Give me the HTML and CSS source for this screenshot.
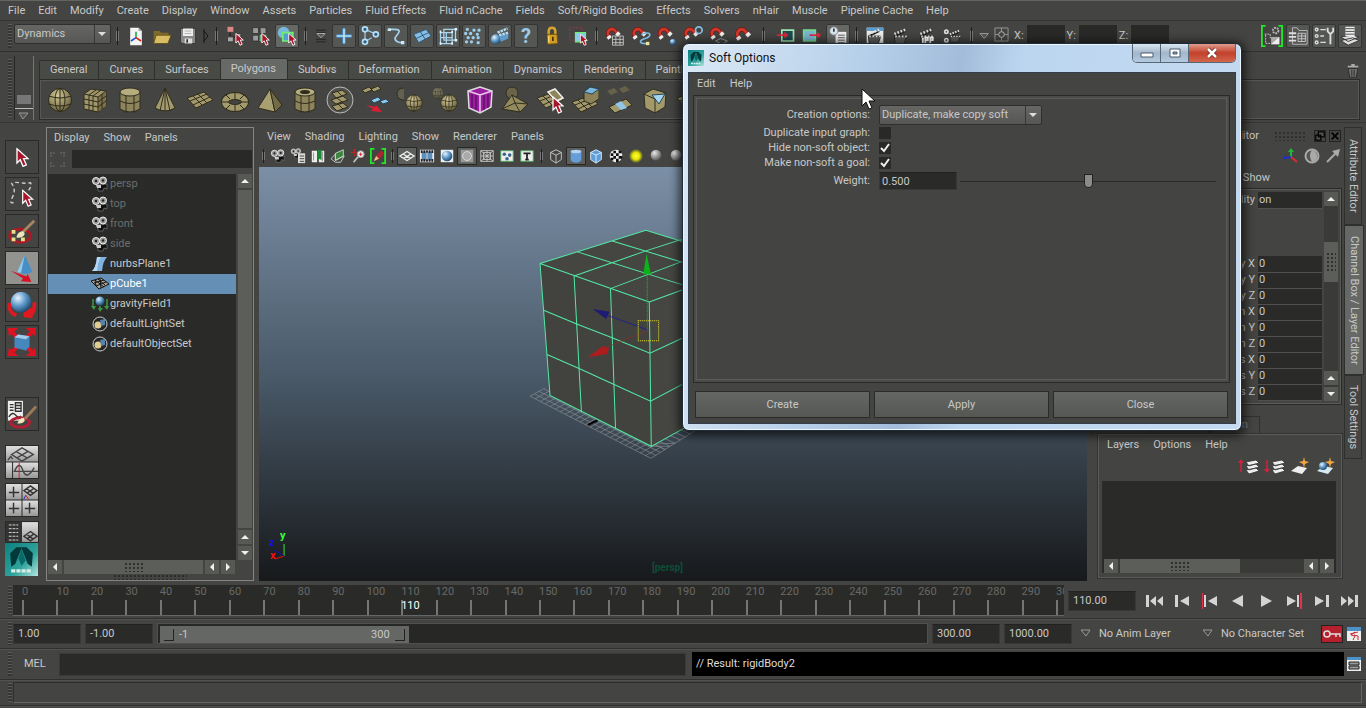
FILE: index.html
```html
<!DOCTYPE html>
<html lang="en">
<head>
    <meta charset="UTF-8">
    <meta name="viewport" content="width=device-width, initial-scale=1.0">
    <title>Autodesk Maya</title>
    <link rel="stylesheet" href="styles.css">
</head>
<body>
    <!-- shared icon shapes -->
    <svg class="sprites" aria-hidden="true">
        <defs>
            <radialGradient id="ball" cx="35%" cy="30%" r="75%"><stop offset="0" stop-color="#e8f4fc"/><stop offset=".5" stop-color="#5f9bcb"/><stop offset="1" stop-color="#1b4368"/></radialGradient>
            <radialGradient id="tanball" cx="40%" cy="30%" r="70%"><stop offset="0" stop-color="#d2c896"/><stop offset="1" stop-color="#6b633e"/></radialGradient>
            <radialGradient id="greyball" cx="35%" cy="30%" r="75%"><stop offset="0" stop-color="#e5e5e5"/><stop offset="1" stop-color="#555"/></radialGradient>
            <radialGradient id="glow"><stop offset="0" stop-color="#ffff40"/><stop offset=".5" stop-color="#e5e500"/><stop offset="1" stop-color="#e5e500" stop-opacity="0"/></radialGradient>
            <linearGradient id="steel" x2="0" y2="1"><stop offset="0" stop-color="#e0e0e0"/><stop offset="1" stop-color="#999"/></linearGradient>
            <linearGradient id="teal" x2="1" y2="1"><stop offset="0" stop-color="#0d7f7e"/><stop offset=".6" stop-color="#2fa39c"/><stop offset="1" stop-color="#b6e4dd"/></linearGradient>
        </defs>
        <symbol id="pointer" viewBox="0 0 12 18"><path d="M1 1v13l3-3 2.500 6 3-1.300-2.500-5.700h4z" fill="#a8142a" stroke="#fff" stroke-width="1.200"/></symbol>
        <symbol id="camera" viewBox="0 0 18 16"><path d="M7 9l9-1v5l-3-1-1 3H7z" fill="#111" stroke="#888" stroke-width=".6"/><circle cx="5" cy="5" r="3.500" fill="#999" stroke="#eee"/><circle cx="12" cy="4.500" r="3.500" fill="#999" stroke="#eee"/><circle cx="5" cy="5" r="1.200" fill="#222"/><circle cx="12" cy="4.500" r="1.200" fill="#222"/><path d="M5 9h5v3H6z" fill="#ccc"/></symbol>
        <symbol id="magnet" viewBox="0 0 24 24"><path d="M5 13C1 7 6 2 11 4.500L16 10" fill="none" stroke="#7c1b17" stroke-width="5"/><path d="M5 13C1 7 6 2 11 4.500L16 10" fill="none" stroke="#d0382c" stroke-width="3"/><path d="M14 8l3 3M4 12l2 3" stroke="#eee" stroke-width="5"/></symbol>
        <symbol id="clapper" viewBox="0 0 24 24"><path d="M4 12h15l-3 9H5z" fill="#5c5d5b" stroke="#222"/><path d="M4 11L16 6l2 1-12 6z" fill="#222"/><path d="M4 9.500l13-5" stroke="#ddd" stroke-width="3" stroke-dasharray="2 2"/><path d="M5 12.500h14" stroke="#ddd" stroke-width="2" stroke-dasharray="2 2"/></symbol>
        <symbol id="plane" viewBox="0 0 28 28"><path d="M1 12l17-6 9 8-17 8z" fill="#a1976a" stroke="#302d1d"/><path d="M4 15l17-7M7 19l17-8M7 10l9 9M12 8l9 9" stroke="#302d1d"/></symbol>
        <symbol id="sphere" viewBox="0 0 28 28"><circle cx="14" cy="14" r="11.500" fill="url(#tanball)" stroke="#2c2919"/><ellipse cx="14" cy="14" rx="5" ry="11.500" fill="none" stroke="#2c2919"/><path d="M14 2.500v23M3 10q11 4 22 0M3 18q11 4 22 0" fill="none" stroke="#2c2919"/></symbol>
        <symbol id="layers" viewBox="0 0 20 20"><path d="M6 13l10-2 3 3-10 3zM6 9l10-2 3 3-10 3zM6 5l10-2 3 3-10 3z" fill="#eee" stroke="#333" stroke-width=".8"/></symbol>
        <symbol id="maya" viewBox="0 0 32 32"><path fill="url(#teal)" d="M0 0h32v32H0z"/><path d="M5 10l6-6h10l6 6-1 13-4-3-6-15-6 15-4 3z" fill="#04393b"/><path d="M13 15l3-9 4 11-4 5z" fill="#0b6967"/><path d="M6 27h20" stroke="#d6eee9" stroke-width="3" stroke-dasharray="4 1"/></symbol>
        <symbol id="up" viewBox="0 0 14 14"><path d="M3 9l4-4 4 4z" fill="#f0f0f0"/></symbol>
        <symbol id="down" viewBox="0 0 14 14"><path d="M3 5l4 4 4-4z" fill="#f0f0f0"/></symbol>
        <symbol id="left" viewBox="0 0 14 14"><path d="M9 3L5 7l4 4z" fill="#f0f0f0"/></symbol>
        <symbol id="right" viewBox="0 0 14 14"><path d="M5 3l4 4-4 4z" fill="#f0f0f0"/></symbol>
    </svg>

    <nav class="menubar main-menu">
        <button>File</button><button>Edit</button><button>Modify</button><button>Create</button><button>Display</button><button>Window</button><button>Assets</button><button>Particles</button><button>Fluid Effects</button><button>Fluid nCache</button><button>Fields</button><button>Soft/Rigid Bodies</button><button>Effects</button><button>Solvers</button><button>nHair</button><button>Muscle</button><button>Pipeline Cache</button><button>Help</button>
    </nav>

    <div class="status-line">
        <span class="grip"></span>
        <select class="mode" aria-label="Menu set"><option>Dynamics</option></select>
        <i class="sep"></i>
        <button class="tool" aria-label="New scene"><svg viewBox="0 0 24 24"><path d="M5 2h10l4 4v17H5z" fill="#f4f4f4"/><path d="M15 2v4h4z" fill="#aaa"/><path d="M12 14V7" stroke="#22b14c" stroke-width="2"/><path d="M12 14l-6 4" stroke="#1c52d8" stroke-width="2"/><path d="M12 14l6 4" stroke="#d8201c" stroke-width="2"/></svg></button>
        <button class="tool" aria-label="Open scene"><svg viewBox="0 0 24 24"><path d="M2 6h7l2 2h9v12H2z" fill="#7f6a2c"/><path d="M5 11h18l-4 10H2z" fill="#d9bd62" stroke="#5b4a19"/></svg></button>
        <button class="tool" aria-label="Save scene"><svg viewBox="0 0 24 24"><path d="M3 3h18v18H5l-2-2z" fill="#898989" stroke="#333"/><path d="M6 3h12v9H6z" fill="#eee"/><path d="M8 6h8M8 9h8" stroke="#aaa"/><path d="M8 15h9v6H8z" fill="#ddd"/><path d="M10 16h2v4h-2z" fill="#333"/></svg></button>
        <svg class="arrow" viewBox="0 0 8 20"><path d="M2 3v14M2 5l4 5-4 5" fill="none" stroke="#151515"/></svg>
        <i class="sep"></i>
        <button class="tool" aria-label="Select by hierarchy"><svg viewBox="0 0 24 24"><path d="M3 1h7v6H3z" fill="#d88"/><path d="M6 8v5h6" stroke="#111" fill="none"/><path d="M3 13h7v6H3zM13 9h6v6h-6z" fill="#aaa" stroke="#333"/><use href="#pointer" x="12" y="8" width="11" height="16"/></svg></button>
        <button class="tool" aria-label="Select by object"><svg viewBox="0 0 24 24"><path d="M2 2h7v7H2zM11 2h7v7h-7zM2 11h7v7H2z" fill="#9b9b9b" stroke="#333"/><path d="M11 11h7v7h-7z" fill="#3ea458" stroke="#7fd890"/><use href="#pointer" x="12" y="8" width="11" height="16"/></svg></button>
        <button class="tool on" aria-label="Select by component"><svg viewBox="0 0 24 24"><circle cx="8" cy="8" r="7" fill="#76b9dd"/><path d="M7 8h12v10H7z" fill="#549fd0" stroke="#6df06d" stroke-width="2"/><use href="#pointer" x="13" y="8" width="11" height="16"/></svg></button>
        <i class="sep"></i>
        <button class="tool narrow" aria-label="Selection masks"><svg viewBox="0 0 20 24"><path d="M4 5h12M4 8h12M4 16h12M4 19h12" stroke="#222"/><path d="M5 9l5 5 5-5z" fill="#555" stroke="#bbb"/></svg></button>
        <button class="tool framed" aria-label="Handles"><svg viewBox="0 0 24 24"><path d="M12 3v18M3 12h18" stroke="#3f81b5" stroke-width="5"/><path d="M12 3v18M3 12h18" stroke="#bde2f8" stroke-width="2"/></svg></button>
        <button class="tool framed" aria-label="Joints"><svg viewBox="0 0 24 24"><path d="M6 4v15M6 4l14 6M6 19l8-5" stroke="#9bcbea" stroke-width="1.500"/><g fill="#2c5f88" stroke="#b8dff5" stroke-width="2"><circle cx="6" cy="4" r="3"/><circle cx="19" cy="10" r="3"/><circle cx="6" cy="19" r="3"/></g></svg></button>
        <button class="tool framed" aria-label="Curves"><svg viewBox="0 0 24 24"><path d="M3 4h7c12 0 2 7 1 10-1 5 5 6 9 6" fill="none" stroke="#a5d2ed" stroke-width="2"/><path d="M2 3h4v3H2zM18 18h4v4h-4z" fill="#cdeafa"/></svg></button>
        <button class="tool framed" aria-label="Surfaces"><svg viewBox="0 0 24 24"><path d="M2 10l15-6 6 8-15 8z" fill="#84bce4" stroke="#294c68"/><path d="M5 15l15-7M10 7l6 9" stroke="#294c68"/></svg></button>
        <button class="tool framed" aria-label="Deformations"><svg viewBox="0 0 24 24"><path d="M3 8h14v13H3zM7 4h14v13H7zM3 14h14M10 8v13" fill="none" stroke="#a9d5ef" stroke-width="1.500"/><path d="M2 7h2M16 7h2M2 21h2M16 21h2M20 4h3M20 17h3" stroke="#e0f4ff" stroke-width="3"/></svg></button>
        <button class="tool framed" aria-label="Dynamics"><svg viewBox="0 0 24 24"><path d="M4 4h2M12 5h9M2 9h9M16 10h6M5 14h15M3 19h10M17 20h5" stroke="#9bcdec" stroke-width="4" stroke-linecap="round" stroke-dasharray="0 6"/></svg></button>
        <button class="tool framed" aria-label="Rendering"><svg viewBox="0 0 24 24"><circle cx="7" cy="16" r="6" fill="url(#ball)"/><path d="M11 12l11-3v6l-9 4z" fill="#5f9bcb"/><path d="M9 8l12-5M11 11l11-3" stroke="#b6def5" stroke-width="3" stroke-dasharray="3 1"/></svg></button>
        <button class="tool framed help" aria-label="Miscellaneous">?</button>
        <button class="tool" aria-label="Lock selection"><svg viewBox="0 0 24 24"><path d="M8 11V7q0-5 4-5t4 5v4" fill="none" stroke="#d5a52d" stroke-width="3"/><path d="M6 10h12l1 11-12 1z" fill="#d39d23" stroke="#6c4a0d"/><path d="M8 12v8" stroke="#f3d06a" stroke-width="2"/><path d="M13 13v5" stroke="#462f06" stroke-width="2"/></svg></button>
        <button class="tool" aria-label="Highlight selection"><svg viewBox="0 0 24 24"><path d="M2 2h15v15H2z" fill="none" stroke="#b72e48" stroke-dasharray="2 2"/><path d="M9 8h12v11H9z" fill="#8dc7ec" stroke="#6df06d" stroke-width="1.500"/><use href="#pointer" x="14" y="9" width="10" height="15"/></svg></button>
        <i class="sep"></i>
        <button class="tool" aria-label="Snap to grids"><svg viewBox="0 0 24 24"><use href="#magnet"/><path d="M9 12h13v11H9zM9 16h13M9 20h13M13 12v11M18 12v11" stroke="#ccc" fill="none"/></svg></button>
        <button class="tool" aria-label="Snap to curves"><svg viewBox="0 0 24 24"><use href="#magnet"/><path d="M13 10c12-5 12 3 4 5s-8 7 4 6" fill="none" stroke="#81b9df" stroke-width="2"/><path d="M18 19h4v4h-4z" fill="#eee59a"/></svg></button>
        <button class="tool" aria-label="Snap to points"><svg viewBox="0 0 24 24"><use href="#magnet"/><circle cx="19" cy="19" r="3.500" fill="url(#ball)"/></svg></button>
        <button class="tool" aria-label="Snap to projected center"><svg viewBox="0 0 24 24"><use href="#magnet"/><circle cx="19" cy="5" r="4" fill="none" stroke="#86bfe5" stroke-width="2"/></svg></button>
        <button class="tool" aria-label="Snap to view planes"><svg viewBox="0 0 24 24"><use href="#magnet"/><path d="M8 18l6-3 8 3-6 4z" fill="none" stroke="#aaa"/></svg></button>
        <button class="tool" aria-label="Make live"><svg viewBox="0 0 24 24"><use href="#magnet" x="-1" y="0" width="26" height="26"/></svg></button>
        <i class="sep"></i>
        <button class="tool spaced" aria-label="Inputs"><svg viewBox="0 0 24 24"><path d="M7 5h14v13H7z" fill="#20494e" stroke="#9ee7b2" stroke-width="2"/><path d="M1 11h10" stroke="#e3243d" stroke-width="2"/><path d="M10 7l5 4-5 4z" fill="#e3243d"/></svg></button>
        <button class="tool" aria-label="Outputs"><svg viewBox="0 0 24 24"><path d="M2 5h14v13H2z" fill="#77b5d3" stroke="#75da8c" stroke-width="2"/><path d="M9 11h10" stroke="#e3243d" stroke-width="2"/><path d="M18 7l5 4-5 4z" fill="#e3243d"/></svg></button>
        <button class="tool on" aria-label="Construction history"><svg viewBox="0 0 24 24"><path d="M9 7h13v15H9z" fill="#eee"/><path d="M12 11h8M12 14h8M12 17h8M12 20h8" stroke="#444"/><circle cx="7" cy="6" r="5" fill="#d5e6ee" stroke="#777"/><path d="M7 3v4" stroke="#333" stroke-width="2"/></svg></button>
        <i class="sep"></i>
        <button class="tool" aria-label="Render view"><svg viewBox="0 0 24 24"><path d="M2 2h20v20H2z" fill="#eee"/><path d="M2 2h20v4H2z" fill="#5b9bcc"/><use href="#clapper"/></svg></button>
        <button class="tool" aria-label="Render"><svg viewBox="0 0 24 24"><use href="#clapper"/></svg></button>
        <button class="tool" aria-label="IPR render"><svg viewBox="0 0 24 24"><use href="#clapper"/><path d="M7 14v7M10 21v-7h3v3h-3M16 21v-7h3v3h-3" stroke="#fff" fill="none" stroke-width="2"/></svg></button>
        <button class="tool" aria-label="Render settings"><svg viewBox="0 0 24 24"><use href="#clapper" x="5" y="0" width="20" height="24"/><circle cx="4" cy="7" r="2" fill="none" stroke="#ddd" stroke-width="2"/><circle cx="4" cy="17" r="2" fill="none" stroke="#ddd" stroke-width="2"/></svg></button>
        <i class="sep"></i>
        <button class="tool slim" aria-label="Input mode"><svg viewBox="0 0 20 24"><path d="M4 9l5 6 5-6z" fill="#555" stroke="#aaa"/></svg></button>
        <svg class="target" viewBox="0 0 16 16"><path d="M1 1h14v14H1zM8 1v14M1 8h14" fill="none" stroke="#999"/><circle cx="8" cy="8" r="3" fill="#444" stroke="#bbb"/></svg>
        <label class="axis">X: <input type="text"></label>
        <label class="axis">Y: <input type="text"></label>
        <label class="axis">Z: <input type="text"></label>
        <div class="panel-toggles">
            <button class="tool" aria-label="Modeling toolkit"><svg viewBox="0 0 24 24"><path d="M4 10h6v4h4M5 11v9h6" fill="none" stroke="#ccc" stroke-dasharray="2 1"/><path d="M11 13h9v8h-9z" fill="#aaa"/><path d="M11 21h9v-8z" fill="#eee"/><circle cx="16" cy="6" r="3" fill="none" stroke="#bbb" stroke-width="2" stroke-dasharray="2 1"/><path d="M5 1H1v22h4M19 1h4v22h-4" fill="none" stroke="#21e72a" stroke-width="2"/></svg></button>
            <button class="tool framed" aria-label="Attribute editor"><svg viewBox="0 0 24 24"><path d="M6 3h5l2 3h9v15H6z" fill="#555" stroke="#bbb"/><path d="M2 9h8M2 13h8M2 17h8" stroke="#ddd" stroke-width="2"/><path d="M12 9h8v9h-8zM12 12h8M12 15h8M16 9v9" fill="none" stroke="#ccc"/></svg></button>
            <button class="tool framed" aria-label="Tool settings"><svg viewBox="0 0 24 24"><g fill="none" stroke="#ddd" stroke-width="1.500"><circle cx="4" cy="5" r="1.500"/><circle cx="4" cy="12" r="1.500"/><circle cx="4" cy="19" r="1.500"/><path d="M8 5h6M8 12h4M8 19h6"/></g><path d="M16 3v4l3 3 3-3V3M19 10v11" fill="none" stroke="#ddd" stroke-width="2"/></svg></button>
            <button class="tool framed" aria-label="Channel box"><svg viewBox="0 0 24 24"><path d="M2 17l13-3 7 3-12 5zM2 13l12-2 8 2-12 5z" fill="#ddd" stroke="#333"/><path d="M7 12V2h10v11z" fill="#eee"/><path d="M7 4h10M7 7h10M7 10h10" stroke="#444"/></svg></button>
        </div>
    </div>

    <div class="shelf">
        <span class="grip"></span>
        <div class="shelf-switch"><i class="block"></i><svg viewBox="0 0 14 8"><path d="M2 1h9L6 7z" fill="#555" stroke="#999"/></svg></div>
        <div class="shelf-body">
            <div class="shelf-tabs">
                <button>General</button><button>Curves</button><button>Surfaces</button><button class="active">Polygons</button><button>Subdivs</button><button>Deformation</button><button>Animation</button><button>Dynamics</button><button>Rendering</button><button>PaintEffects</button>
                <svg class="trash" viewBox="0 0 16 16"><path d="M3 5h10l-1 10H4z" fill="#888" stroke="#222"/><path d="M2 3h12M6 1h4" stroke="#aaa" stroke-width="2"/><path d="M6 6v8M8 6v8M10 6v8" stroke="#222"/></svg>
            </div>
            <div class="shelf-items">
                <button aria-label="Sphere"><svg viewBox="0 0 28 28"><use href="#sphere"/></svg></button>
                <button aria-label="Cube"><svg viewBox="0 0 28 28"><path d="M3 8l7-5 15 2v15l-8 6-14-3z" fill="#a0966a" stroke="#302d1d"/><path d="M17 11l8-6v15l-8 6z" fill="#7a7149"/><path d="M3 8l14 3 8-6M17 11v15M8 9v15M12 10v15M3 13l14 3 8-6M3 18l14 3 8-6M15 4l-7 5M20 4l-8 6M21 8v15" fill="none" stroke="#302d1d"/></svg></button>
                <button aria-label="Cylinder"><svg viewBox="0 0 28 28"><path d="M4 6v17q10 6 20 0V6z" fill="#8d845b" stroke="#302d1d"/><ellipse cx="14" cy="6" rx="10" ry="4" fill="#b5ac7f" stroke="#302d1d"/><path d="M4 15q10 5 20 0M10 10v17M18 10v17" fill="none" stroke="#302d1d"/></svg></button>
                <button aria-label="Cone"><svg viewBox="0 0 28 28"><path d="M14 2L4 22q10 6 20 0z" fill="#a39a6c" stroke="#302d1d"/><path d="M14 2l-5 23M14 2v23M14 2l5 23" stroke="#302d1d"/></svg></button>
                <button aria-label="Plane"><svg viewBox="0 0 28 28"><use href="#plane"/></svg></button>
                <button aria-label="Torus"><svg viewBox="0 0 28 28"><ellipse cx="14" cy="16" rx="10" ry="6" fill="none" stroke="#302d1d" stroke-width="8"/><ellipse cx="14" cy="16" rx="10" ry="6" fill="none" stroke="#a39a6c" stroke-width="6"/><path d="M14 7v6M14 19v6M1 16h6M21 16h6M5 9l4 4M23 9l-4 4M5 23l4-4M23 23l-4-4" stroke="#302d1d"/></svg></button>
                <button aria-label="Pyramid"><svg viewBox="0 0 28 28"><path d="M14 3L2 22l17 4z" fill="#a9a071" stroke="#302d1d"/><path d="M14 3l5 23 7-7z" fill="#736b45" stroke="#302d1d"/></svg></button>
                <button aria-label="Pipe"><svg viewBox="0 0 28 28"><path d="M4 6v17q10 6 20 0V6z" fill="#8d845b" stroke="#302d1d"/><ellipse cx="14" cy="6" rx="10" ry="4" fill="#b5ac7f" stroke="#302d1d"/><ellipse cx="14" cy="6" rx="5" ry="2" fill="#302d1d"/><path d="M4 15q10 5 20 0M10 10v17M18 10v17" fill="none" stroke="#302d1d"/></svg></button>
                <button aria-label="Platonic solids"><svg viewBox="0 0 28 28"><circle cx="14" cy="14" r="13" fill="#50514b" stroke="#bbb"/><g fill="#a1976a" stroke="#302d1d"><path d="M6 20l11-3 5 4-11 4zM5 14l12-4 5 4-12 4zM6 7l10-3 5 4-11 4zM12 18l5 5M11 12l5 4M11 5l5 5"/></g></svg></button>
                <button aria-label="Extract"><svg viewBox="0 0 28 28"><path d="M1 4l7-3 3 3-7 3zM10 3l7-3 3 3-7 3z" fill="#a39a6c" stroke="#302d1d"/><path d="M10 14l7-3 3 3-7 3zM19 15l6-2 3 3-6 2z" fill="#8cc7e8" stroke="#274458"/><path d="M5 19l10 2-1-3 7 8-11-1 2-2z" fill="#df1e35"/></svg></button>
                <button aria-label="Separate"><svg viewBox="0 0 28 28"><path d="M8 2q-7 0-7 6t7 6" fill="#626050" stroke="#302d1d"/><use href="#sphere" x="8" y="7" width="20" height="20"/></svg></button>
                <button aria-label="Combine"><svg viewBox="0 0 28 28"><use href="#sphere" x="0" y="0" width="14" height="14" opacity=".5"/><use href="#sphere" x="8" y="7" width="20" height="20"/></svg></button>
                <button aria-label="Smooth proxy"><svg viewBox="0 0 28 28"><path d="M2 5l12-4 12 4-1 16-11 6L3 22z" fill="#9b1d9f" stroke="#ddd" stroke-width="1.500"/><path d="M2 5l12 4 12-4M14 9v18" fill="none" stroke="#eac9ea" stroke-width="1.500"/><path d="M6 8v14M10 9v15M18 9v15M22 8v14" stroke="#420c4a"/></svg></button>
                <button aria-label="Sculpt"><svg viewBox="0 0 28 28"><circle cx="11" cy="7" r="6" fill="#696449" stroke="#302d1d"/><path d="M1 23L11 9l16 9-8 8z" fill="#938a5e" stroke="#302d1d"/><path d="M1 23l13-6 5 9M11 9l3 8 13 1" fill="none" stroke="#302d1d"/></svg></button>
                <button aria-label="Split polygon"><svg viewBox="0 0 28 28"><use href="#plane"/><path d="M12 6l7-3 8 9-7 3z" fill="#8e855a" stroke="#eee" stroke-width="1.500"/><use href="#pointer" x="16" y="10" width="12" height="18"/></svg></button>
                <button aria-label="Extrude"><svg viewBox="0 0 28 28"><use href="#plane" y="4"/><path d="M13 6l6-5 9 2v10l-8 5-7-3z" fill="#8c8359" stroke="#302d1d"/><path d="M13 6l6-5 9 2-7 5z" fill="#79b8dd" stroke="#284458"/></svg></button>
                <button aria-label="Bridge"><svg viewBox="0 0 28 28"><path d="M1 5l7-3 4 4-7 3zM13 3l6-3 5 4-7 3z" fill="#666248"/><path d="M3 21l17-8 6 6-17 8z" fill="#a39a6c" stroke="#302d1d"/><path d="M9 18l6-3 6 7-6 2z" fill="#91c6e7"/></svg></button>
                <button aria-label="Bevel"><svg viewBox="0 0 28 28"><path d="M3 8l9-5 13 4-1 14-10 6-10-5z" fill="#a39a6c" stroke="#302d1d"/><path d="M3 8l11 5 11-6M14 13v14" fill="none" stroke="#302d1d"/><path d="M11 9l13-1-6 10z" fill="#a4d3ed" stroke="#284458"/></svg></button>
                <button aria-label="Merge"><svg viewBox="0 0 28 28"><use href="#plane"/></svg></button>
            </div>
        </div>
    </div>

    <main class="workspace">
        <aside class="toolbox">
            <button aria-label="Select"><svg viewBox="0 0 34 34"><use href="#pointer" x="10" y="7" width="15" height="21"/></svg></button>
            <button aria-label="Lasso"><svg viewBox="0 0 34 34"><path d="M8 26Q3 28 7 20T6 6q2-2 8-1t12 0q2 3-2 8" fill="none" stroke="#ccc" stroke-width="1.500" stroke-dasharray="4 3"/><use href="#pointer" x="16" y="12" width="14" height="19"/></svg></button>
            <button aria-label="Paint select"><svg viewBox="0 0 34 34"><ellipse cx="15" cy="22" rx="11" ry="7" fill="none" stroke="#b01724" stroke-width="3"/><path d="M18 18L30 6" stroke="#a48662" stroke-width="3"/><path d="M11 24q1-6 7-7l2 3q-2 5-9 4z" fill="#eee5ba"/><path d="M6 16h4v4H6zM6 24h4v4H6zM16 24h4v4h-4z" fill="#e8df8d"/></svg></button>
            <button class="active" aria-label="Move"><svg viewBox="0 0 34 34"><path d="M20 3l-8 18q8 5 16 0z" fill="#4790c5"/><path d="M20 3l-4 19q-3 0-4-1z" fill="#96c9eb"/><path d="M5 20l17 6 1-3 4 9-11-1 2-3z" fill="#d61125"/></svg></button>
            <button aria-label="Rotate"><svg viewBox="0 0 34 34"><path d="M4 15q-2 10 7 13M30 14q1 8-3 13" fill="none" stroke="#df1822" stroke-width="4"/><path d="M18 21l12-1-2 11-9-1z" fill="#df1822"/><circle cx="16" cy="14" r="11" fill="url(#ball)"/></svg></button>
            <button aria-label="Scale"><svg viewBox="0 0 34 34"><path d="M7 7l20 20M27 7L7 27" stroke="#e01120" stroke-width="4"/><path d="M2 2h11l-10 9zM32 2H21l10 9zM2 32h11L3 23zM32 32H21l10-9z" fill="#e01120"/><path d="M9 12l4-3 12 2v11l-4 4-12-3z" fill="#4588bd"/><path d="M9 12l4-3 12 2-4 3z" fill="#a2cbe9"/></svg></button>
            <button class="last-tool" aria-label="Last tool"><svg viewBox="0 0 34 34"><path d="M2 3h16v21H2z" fill="#eee"/><path d="M4 7h4M4 10h4M4 13h4M10 5h6v9h-6zM10 8h6M10 11h6M3 20q4-6 7-2t6 1" fill="none" stroke="#333" stroke-width="1.500"/><ellipse cx="15" cy="26" rx="10" ry="5" fill="none" stroke="#b21e34" stroke-width="3"/><path d="M20 22L32 9" stroke="#9d7a56" stroke-width="3"/><path d="M12 27q2-6 7-6l1 3q-2 4-8 3z" fill="#eee5ba"/></svg></button>
            <button class="layout" aria-label="Persp graph layout"><svg viewBox="0 0 34 34"><path d="M0 0h34v17H0z" fill="url(#steel)"/><path d="M0 17h34v17H0z" fill="url(#steel)"/><path d="M0 17h34M7 17v17" stroke="#222"/><path d="M6 9l11-7 12 7-12 7zM11 6l12 7M23 6l-12 7M2 15l3-4 2 3M8 27h26M9 27q5-12 9-1t12-3" fill="none" stroke="#444" stroke-width="1.500"/><path d="M14 18v16" stroke="#d13"/></svg></button>
            <button class="layout" aria-label="Four view"><svg viewBox="0 0 34 34"><path d="M0 0h34v17H0z" fill="url(#steel)"/><path d="M0 17h34v17H0z" fill="url(#steel)"/><path d="M17 0v34M0 17h34" stroke="#222"/><path d="M8 3v11M3 9h11M8 20v11M3 26h11M25 20v11M20 26h11M19 7l7-5 7 5-7 5zM22 5l7 5M29 5l-7 5" fill="none" stroke="#333" stroke-width="1.500"/><path d="M19 16l2-4" stroke="#22c"/><path d="M21 12l3 4" stroke="#d12"/></svg></button>
            <button class="layout cut" aria-label="Outliner persp layout"><svg viewBox="0 0 34 21"><path d="M0 0h17v21H0z" fill="#333"/><path d="M17 0h17v21H17z" fill="url(#steel)"/><path d="M3 3h10M3 7h10M3 11h10M3 15h10M3 19h10" stroke="#ddd" stroke-dasharray="3 1"/><path d="M19 15l7-5 7 5-7 5zM22 13l7 5M29 13l-7 5" fill="none" stroke="#333" stroke-width="1.500"/></svg></button>
            <svg class="logo" viewBox="0 0 32 32"><use href="#maya"/></svg>
        </aside>

        <section class="outliner">
            <nav class="menubar"><button>Display</button><button>Show</button><button>Panels</button></nav>
            <div class="filter"><svg viewBox="0 0 16 16"><path d="M1 5V1h4M11 1h4v4M15 11v4h-4M5 15H1v-4" fill="none" stroke="#5e5f5d" stroke-width="2" stroke-dasharray="2 1"/></svg><input type="text" aria-label="Filter"></div>
            <div class="tree-area">
                <ul class="tree">
                    <li class="dim"><svg viewBox="0 0 18 16"><use href="#camera"/></svg>persp</li>
                    <li class="dim"><svg viewBox="0 0 18 16"><use href="#camera"/></svg>top</li>
                    <li class="dim"><svg viewBox="0 0 18 16"><use href="#camera"/></svg>front</li>
                    <li class="dim"><svg viewBox="0 0 18 16"><use href="#camera"/></svg>side</li>
                    <li><svg viewBox="0 0 18 16"><path d="M6 1h10q-4 4-5 14H1Q5 12 6 1z" fill="#7fb2e0"/><path d="M6 1h4q-3 4-4 14H1Q5 12 6 1z" fill="#b9d8f2"/></svg>nurbsPlane1</li>
                    <li class="selected"><svg viewBox="0 0 18 16"><path d="M0 5l10-3 8 6-10 5zM3 7l10-3M5 10l10-4M4 4l9 7M7 3l7 6M4 4l1 6M9 3l1 9" fill="#a8a496" stroke="#111"/></svg>pCube1</li>
                    <li><svg viewBox="0 0 18 16"><circle cx="9" cy="5" r="4.500" fill="url(#ball)"/><path d="M2 3v9M16 3v9M9 10v4" stroke="#3b9842" stroke-width="1.500"/><path d="M0 10h5l-2 4zM13 10h5l-2 4zM7 12h5l-3 4z" fill="#3b9842"/></svg>gravityField1</li>
                    <li><svg viewBox="0 0 18 16"><circle cx="9" cy="8" r="7" fill="#252525" stroke="#ccc"/><circle cx="7" cy="9" r="3.500" fill="#e0cd91"/><path d="M9 4l5-1v6l-4 1z" fill="#5682ac"/></svg>defaultLightSet</li>
                    <li><svg viewBox="0 0 18 16"><circle cx="9" cy="8" r="7" fill="#252525" stroke="#ccc"/><circle cx="7" cy="9" r="3.500" fill="#e0cd91"/><path d="M9 4l5-1v6l-4 1z" fill="#5682ac"/></svg>defaultObjectSet</li>
                </ul>
                <div class="vscroll"><svg class="cap"><use href="#up"/></svg><span class="thumb"></span><svg class="cap"><use href="#up"/></svg><svg class="cap"><use href="#down"/></svg></div>
            </div>
            <div class="hscroll"><svg class="cap"><use href="#left"/></svg><span class="thumb"><i class="dots"></i></span><svg class="cap"><use href="#left"/></svg><svg class="cap"><use href="#right"/></svg></div>
            <div class="resize"></div>
        </section>

        <section class="viewport">
            <nav class="menubar"><button>View</button><button>Shading</button><button>Lighting</button><button>Show</button><button>Renderer</button><button>Panels</button></nav>
            <div class="view-tools">
                <i class="sep"></i>
                <button aria-label="Select camera"><svg viewBox="0 0 18 18"><use href="#camera"/></svg></button>
                <button aria-label="Camera attributes"><svg viewBox="0 0 18 18"><use href="#camera" width="14" height="12"/><path d="M9 6h8v11H9z" fill="#ddd"/><path d="M11 9h5M11 12h5M11 15h5" stroke="#333"/></svg></button>
                <button aria-label="Bookmarks"><svg viewBox="0 0 18 18"><path d="M2 3h6v13H2zM10 3h6v13h-6z" fill="#eee"/><path d="M4 5v9M14 4v11" stroke="#888"/><path d="M9 2h4v12l-2-2-2 2z" fill="#198634"/></svg></button>
                <button aria-label="Image plane"><svg viewBox="0 0 18 18"><path d="M6 6l9-4v7l-9 5z" fill="#3e8440" stroke="#c7dcc7"/><path d="M1 12l5-5v7l10-5-4 7H6z" fill="none" stroke="#c7dcc7"/></svg></button>
                <button aria-label="2D pan zoom"><svg viewBox="0 0 18 18"><path d="M5 1v9M1 5h9" stroke="#d22" stroke-width="1.500" stroke-dasharray="2 1"/><circle cx="12" cy="7" r="4" fill="#eee" stroke="#888"/><path d="M10 7h4M12 5v4" stroke="#c22"/><path d="M9 10l-5 6" stroke="#bbb" stroke-width="2"/></svg></button>
                <button aria-label="Grease pencil"><svg viewBox="0 0 18 18"><path d="M4 15l3-6 5-6 4 3-5 6z" fill="#b5222f"/><path d="M4 15l3-6 3 3z" fill="#eac98f"/><path d="M5 1H1v16h4M13 1h4v16h-4" fill="none" stroke="#21e72a" stroke-width="2"/></svg></button>
                <i class="sep"></i>
                <button class="on" aria-label="Grid"><svg viewBox="0 0 18 18"><path d="M1 9l8-5 8 5-8 5zM5 7l8 5M13 7l-8 5" fill="none" stroke="#eee" stroke-width="1.500"/></svg></button>
                <button aria-label="Film gate"><svg viewBox="0 0 18 18"><path d="M2 3h14v12H2z" fill="#5e8fb8" stroke="#eee" stroke-width="2"/><path d="M2 4h14M2 14h14" stroke="#222" stroke-width="3" stroke-dasharray="2 1"/><path d="M9 5v8" stroke="#ddd"/></svg></button>
                <button aria-label="Resolution gate"><svg viewBox="0 0 18 18"><path d="M2 2h14v14H2z" fill="#eee"/><circle cx="9" cy="9" r="6" fill="url(#ball)"/></svg></button>
                <button class="on" aria-label="Gate mask"><svg viewBox="0 0 18 18"><path d="M2 2h14v14H2z" fill="#999"/><circle cx="9" cy="9" r="5" fill="#aaa" stroke="#ddd"/></svg></button>
                <button aria-label="Field chart"><svg viewBox="0 0 18 18"><path d="M2 3h14v12H2zM2 3l14 12M16 3L2 15M9 3v12M2 9h14M5 5h8v8H5z" fill="none" stroke="#ccc"/></svg></button>
                <button aria-label="Safe action"><svg viewBox="0 0 18 18"><path d="M2 3h14v12H2z" fill="#eee" stroke="#4aa75a"/><circle cx="6" cy="7" r="2" fill="#37648a"/><circle cx="12" cy="8" r="2" fill="#37648a"/><circle cx="9" cy="12" r="2" fill="#37648a"/></svg></button>
                <button aria-label="Safe title"><svg viewBox="0 0 18 18"><path d="M2 3h14v12H2z" fill="#eee" stroke="#4aa75a"/><path d="M5 6h8M9 6v8M7 13h4" stroke="#222" stroke-width="2"/></svg></button>
                <i class="sep"></i>
                <button aria-label="Wireframe"><svg viewBox="0 0 18 18"><path d="M3 5l6-3 6 3v8l-6 4-6-4zM3 5l6 3 6-3M9 8v9" fill="none" stroke="#ccc"/></svg></button>
                <button class="on" aria-label="Smooth shade"><svg viewBox="0 0 18 18"><path d="M3 4h12v10q-6 5-12 0z" fill="#669dd8"/><ellipse cx="9" cy="4" rx="6" ry="2" fill="#b2d3f3"/></svg></button>
                <button aria-label="Wire on shaded"><svg viewBox="0 0 18 18"><path d="M3 5l6-3 6 3v8l-6 4-6-4z" fill="#5e9dd8" stroke="#e4f2ff"/><path d="M3 5l6 3 6-3M9 8v9" fill="none" stroke="#e4f2ff"/></svg></button>
                <button aria-label="Textured"><svg viewBox="0 0 18 18"><circle cx="9" cy="9" r="7" fill="#eee"/><path d="M6 3h3v3H6zM3 6h3v3H3zM9 6h3v3H9zM6 9h3v3H6zM12 9h4v3h-4zM3 11h3v3H3zM9 12h3v4H9zM12 3h3v3h-3z" fill="#111"/></svg></button>
                <button aria-label="Use all lights"><svg viewBox="0 0 18 18"><circle cx="9" cy="9" r="8" fill="url(#glow)"/></svg></button>
                <button aria-label="Shadows"><svg viewBox="0 0 18 18"><circle cx="9" cy="8" r="6" fill="url(#greyball)"/></svg></button>
                <button aria-label="Occlusion"><svg viewBox="0 0 18 18"><circle cx="9" cy="8" r="6" fill="url(#greyball)"/></svg></button>
            </div>
            <svg class="scene" viewBox="259 167 828 413" preserveAspectRatio="xMinYMin slice">
                <g transform="translate(510 210) scale(.3333)">
                    <!-- floor grid -->
                    <g fill="none" stroke="#858a8d" stroke-width="2">
                        <path d="M58 557L420 743L560 655M72 550L434 734M86 543L448 725M100 535L462 716M420 707L476 707M430 700L492 698"/>
                        <path d="M58 557l44-24M73 565l44-24M88 573l44-24M103 580l44-24M118 588l44-24M133 596l44-24M148 604l44-24M163 611l44-24M178 619l44-24M193 627l44-24M208 634l44-24M223 642l44-24M238 650l44-24M253 657l44-24M268 665l44-24M283 673l44-24M298 681l44-24M313 688l44-24M328 696l44-24M343 704l44-24M358 711l44-24M373 719l44-24M388 727l44-24M403 735l44-24M405 690l58 27M420 681l58 26M435 672l58 26M450 663l58 25M465 654l58 25M480 645l58 25"/>
                    </g>
                    <path d="M232 643l28-14" stroke="#000" stroke-width="6"/>
                    <path d="M88 160L405 60L560 108V630L421 707L118 555z" fill="#454642"/>
                    <path d="M88 160L415 275L421 707L118 555z" fill="#42433f"/>
                    <g fill="none" stroke="#53e9a5" stroke-width="3">
                        <path d="M88 160L405 60L560 108M190 197L405 122L560 72M299 235L510 155L560 138M415 275L560 222M302 92L560 170M200 125L560 238M88 160L415 275"/>
                        <path d="M88 160L118 555L421 707L560 630M190 197L212 605M299 235L314 652M415 275L421 707"/>
                        <path d="M99 300L196 340L304 382L417 428L560 362M109 432L205 474L308 521L419 572L560 497"/>
                    </g>
                    <path d="M409 360V190" stroke="#14c81d" stroke-width="3" stroke-dasharray="3 3"/>
                    <path d="M407 130l-10 62h23z" fill="#0bb319"/>
                    <path d="M409 358L290 315" stroke="#24218b" stroke-width="3"/>
                    <path d="M246 296l50 8-10 22z" fill="#1d1b73"/>
                    <path d="M409 362L292 408" stroke="#8c2929" stroke-width="2"/>
                    <path d="M230 441l46-34 18 6-4 18z" fill="#ae1d1d"/>
                    <path d="M382 331h61v60h-61z" fill="none" stroke="#eee622" stroke-width="3" stroke-dasharray="3 3"/>
                </g>
                <path d="M284 555v-12" stroke="#35e63b"/><path d="M284 555l-9 3" stroke="#d11"/><path d="M284 555l-10-6" stroke="#11a"/>
                <text class="axis-y" x="280" y="538">y</text><text class="axis-z" x="269" y="545">z</text><text class="axis-x" x="270" y="558">x</text>
                <text class="camera-name" x="651" y="570">[persp]</text>
            </svg>
        </section>

        <section class="right-panel">
            <div class="channel-title"><span>Channel Box / Layer Editor</span><i class="dots"></i><svg viewBox="0 0 12 12"><path d="M4 1h7v6H4zM1 5h6v6H1z" fill="#555" stroke="#000" stroke-width="1.500"/></svg><svg viewBox="0 0 12 12"><path d="M2 2l8 8M10 2l-8 8" stroke="#000" stroke-width="2"/></svg></div>
            <div class="channel-icons">
                <svg viewBox="0 0 18 18"><path d="M9 10V4" stroke="#1db938" stroke-width="2"/><path d="M6 5l3-4 3 4z" fill="#1db938"/><path d="M9 10l-6 1" stroke="#1c33c4" stroke-width="2"/><path d="M4 8v5l-4-2z" fill="#1c33c4"/><path d="M9 10l6 5" stroke="#d82a36" stroke-width="2"/></svg>
                <svg viewBox="0 0 18 18"><circle cx="9" cy="9" r="6.500" fill="#555" stroke="#aaa" stroke-width="2"/><path d="M9 3q-4 5 0 12 6-1 5-7-1-4-5-5z" fill="#aaa"/></svg>
                <svg viewBox="0 0 18 18"><path d="M3 15L13 5" stroke="#aaa" stroke-width="2"/><path d="M16 2l-2 8-6-6z" fill="#aaa"/></svg>
            </div>
            <nav class="menubar channel-menu"><button>Channels</button><button>Edit</button><button>Object</button><button>Show</button></nav>
            <div class="channel-box">
                <table>
                    <tr><th>Visibility</th><td>on</td></tr>
                    <tr class="gap"><th colspan="2"></th></tr>
                    <tr><th>Initial Velocity X</th><td>0</td></tr>
                    <tr><th>Initial Velocity Y</th><td>0</td></tr>
                    <tr><th>Initial Velocity Z</th><td>0</td></tr>
                    <tr><th>Initial Spin X</th><td>0</td></tr>
                    <tr><th>Initial Spin Y</th><td>0</td></tr>
                    <tr><th>Initial Spin Z</th><td>0</td></tr>
                    <tr><th>Center Of Mass X</th><td>0</td></tr>
                    <tr><th>Center Of Mass Y</th><td>0</td></tr>
                    <tr><th>Center Of Mass Z</th><td>0</td></tr>
                </table>
                <div class="vscroll track"><svg class="cap"><use href="#up"/></svg><span class="thumb short"><i class="dots"></i></span><svg class="cap"><use href="#up"/></svg><svg class="cap"><use href="#down"/></svg></div>
            </div>
            <div class="layer-tabs"><button>Display</button><button>Render</button><button>Anim</button></div>
            <div class="layer-panel">
                <nav class="menubar"><button>Layers</button><button>Options</button><button>Help</button></nav>
                <div class="layer-icons">
                    <svg viewBox="0 0 20 20"><use href="#layers" x="2"/><path d="M3 15V5" stroke="#d3223d" stroke-width="1.500"/><path d="M0 6l3-4 3 4z" fill="#d3223d"/></svg>
                    <svg viewBox="0 0 20 20"><use href="#layers" x="2"/><path d="M3 3v10" stroke="#d3223d" stroke-width="1.500"/><path d="M0 12l3 4 3-4z" fill="#d3223d"/></svg>
                    <svg viewBox="0 0 20 20"><path d="M1 14l7-5 9 2-5 6z" fill="#eee"/><path d="M14 0l1 4 4 1-4 2-1 4-1-4-4-2 4-1z" fill="#f1a63e"/></svg>
                    <svg viewBox="0 0 20 20"><path d="M1 14l7-5 9 2-5 6z" fill="#d5eaf2"/><circle cx="7" cy="9" r="4" fill="url(#ball)"/><path d="M14 0l1 4 4 1-4 2-1 4-1-4-4-2 4-1z" fill="#f1a63e"/></svg>
                </div>
                <div class="layer-list"></div>
                <div class="hscroll track"><svg class="cap"><use href="#left"/></svg><span class="thumb half"><i class="dots"></i></span><svg class="cap"><use href="#left"/></svg><svg class="cap"><use href="#right"/></svg></div>
            </div>
        </section>

        <nav class="side-tabs"><button class="attr">Attribute Editor</button><button class="chan active">Channel Box / Layer Editor</button><button class="sett">Tool Settings</button></nav>
    </main>

    <div class="time-row">
        <span class="grip"></span>
        <div class="timeline">
            <span>0</span><span>10</span><span>20</span><span>30</span><span>40</span><span>50</span><span>60</span><span>70</span><span>80</span><span>90</span><span>100</span><span class="current">110<b>110</b></span><span>120</span><span>130</span><span>140</span><span>150</span><span>160</span><span>170</span><span>180</span><span>190</span><span>200</span><span>210</span><span>220</span><span>230</span><span>240</span><span>250</span><span>260</span><span>270</span><span>280</span><span>290</span><span>300</span>
        </div>
        <input class="field" type="text" value="110.00" aria-label="Current time">
        <div class="playback">
            <button aria-label="Go to start"><svg viewBox="0 0 20 16"><path d="M2 2h3v12H2zM12 3v10L6 8zM19 3v10l-6-5z"/></svg></button>
            <button aria-label="Step back frame"><svg viewBox="0 0 20 16"><path d="M3 2h3v12H3zM17 3v10L8 8z"/></svg></button>
            <button aria-label="Step back key"><svg viewBox="0 0 20 16"><path d="M4 2h2v12H4zM17 3v10L8 8z"/><path class="key" d="M2 0h1v16H2z"/></svg></button>
            <button aria-label="Play backwards"><svg viewBox="0 0 20 16"><path d="M15 2v12L4 8z"/></svg></button>
            <button aria-label="Play forwards"><svg viewBox="0 0 20 16"><path d="M5 2v12l11-6z"/></svg></button>
            <button aria-label="Step forward key"><svg viewBox="0 0 20 16"><path d="M3 3v10l9-5zM13 2h2v12h-2z"/><path class="key" d="M16 0h2v16h-2z"/></svg></button>
            <button aria-label="Step forward frame"><svg viewBox="0 0 20 16"><path d="M3 3v10l9-5zM14 2h3v12h-3z"/></svg></button>
            <button aria-label="Go to end"><svg viewBox="0 0 20 16"><path d="M1 3v10l6-5zM8 3v10l6-5zM15 2h3v12h-3z"/></svg></button>
        </div>
    </div>

    <div class="range-row">
        <span class="grip"></span>
        <input class="field" type="text" value="1.00" aria-label="Animation start">
        <input class="field" type="text" value="-1.00" aria-label="Range start">
        <div class="range"><div class="range-bar"><i class="nub"></i><span>-1</span><span class="end">300</span><i class="nub"></i></div></div>
        <input class="field" type="text" value="300.00" aria-label="Range end">
        <input class="field" type="text" value="1000.00" aria-label="Animation end">
        <button class="drop anim"><svg viewBox="0 0 12 10"><path d="M1 1h9L6 7z" fill="#444" stroke="#999"/></svg>No Anim Layer</button>
        <button class="drop"><svg viewBox="0 0 12 10"><path d="M1 1h9L6 7z" fill="#444" stroke="#999"/></svg>No Character Set</button>
        <button class="auto-key" aria-label="Auto key"><svg viewBox="0 0 20 14"><circle cx="5" cy="7" r="3" fill="none" stroke="#ddd" stroke-width="1.500"/><path d="M8 7h10v3M14 7v3" fill="none" stroke="#ddd" stroke-width="1.500"/></svg></button>
        <button class="mini" aria-label="Preferences"><svg viewBox="0 0 14 14"><path fill="#eee" d="M0 0h14v14H0z"/><path fill="#4c92c7" d="M0 0h14v4H0z"/><path d="M8 5l-4 3 4 1-2 4M3 7l8-2M7 8l4 1v4" stroke="#c32b30" fill="none"/></svg></button>
    </div>

    <div class="command-row">
        <span class="grip"></span>
        <label for="mel">MEL</label>
        <input id="mel" type="text">
        <output>// Result: rigidBody2</output>
        <button class="mini" aria-label="Script editor"><svg viewBox="0 0 14 14"><path fill="#eee" d="M0 0h14v14H0z"/><path fill="#4c92c7" d="M0 0h14v3H0z"/><path d="M2 5h10v3H2zM2 9h10v3H2z" fill="#999" stroke="#222"/></svg></button>
    </div>

    <div class="help-row"><span class="grip"></span><div class="help-line"></div></div>
    <footer class="edge"></footer>

    <!-- floating option window -->
    <div class="dialog" role="dialog" aria-label="Soft Options">
        <header class="titlebar">
            <svg viewBox="0 0 32 32"><use href="#maya"/></svg>
            <h1>Soft Options</h1>
            <div class="win-buttons">
                <button aria-label="Minimize"><svg viewBox="0 0 14 12"><path d="M1 6h12v4H1z" fill="#fff" stroke="#4b5a6b"/></svg></button><button aria-label="Maximize"><svg viewBox="0 0 14 12"><path d="M2 2h10v8H2z" fill="#fff" stroke="#4b5a6b"/><path d="M5 5h4v2H5z" fill="#8fa4b8" stroke="#4b5a6b"/></svg></button><button class="close" aria-label="Close window"><svg viewBox="0 0 14 12"><path d="M3 2l8 8M11 2l-8 8" stroke="#6b2b24" stroke-width="4"/><path d="M3 2l8 8M11 2l-8 8" stroke="#fff" stroke-width="2.500"/></svg></button>
            </div>
        </header>
        <div class="dialog-body">
            <nav class="menubar"><button>Edit</button><button>Help</button></nav>
            <div class="options">
                <form class="option-form">
                    <label for="creation">Creation options:</label>
                    <select id="creation"><option>Duplicate, make copy soft</option></select>
                    <label for="dup">Duplicate input graph:</label><input id="dup" type="checkbox">
                    <label for="hide">Hide non-soft object:</label><input id="hide" type="checkbox" checked>
                    <label for="goal">Make non-soft a goal:</label><input id="goal" type="checkbox" checked>
                    <label for="weight">Weight:</label>
                    <div class="weight"><input id="weight" class="field" type="text" value="0.500"><input type="range" min="0" max="1" step="0.01" value="0.5" aria-label="Weight slider"></div>
                </form>
            </div>
            <div class="actions"><button>Create</button><button>Apply</button><button>Close</button></div>
        </div>
    </div>
    <svg class="cursor" viewBox="0 0 14 22"><path d="M1 1v17l4-4 3 7 3-1-3-7h6z" fill="#fff" stroke="#111"/></svg>
</body>
</html>
```
FILE: styles.css
```css
* {
    box-sizing: border-box;
}
body {
    margin: 0;
    height: 100vh;
    display: flex;
    flex-direction: column;
    overflow: hidden;
    position: relative;
    background: #444542;
    color: #c8c8c8;
    font-family: Roboto, "Noto Sans", sans-serif;
    font-size: 11px;
    line-height: 14px;
}
button, input, select {
    font: inherit;
    color: inherit;
}
button {
    padding: 0;
    border: none;
    background: none;
    white-space: nowrap;
}
input, select {
    min-width: 0;
    margin: 0;
    border: none;
    border-radius: 0;
}
svg {
    display: block;
    flex: none;
}
.sprites {
    position: absolute;
    width: 0;
    height: 0;
}
.menubar {
    display: flex;
    gap: 14px;
    height: 20px;
    flex: none;
    align-items: center;
    padding-left: 8px;
}
.main-menu {
    gap: 13px;
    height: 21px;
    padding-top: 1px;
    border-top: 1px solid #62645f;
    border-bottom: 1px solid #343533;
}
.grip {
    width: 4px;
    flex: none;
    align-self: stretch;
    margin: 3px 2px 3px 8px;
    background: repeating-linear-gradient(#5b5c59 0 1px, #363734 1px 3px);
}
.field {
    width: 68px;
    height: 20px;
    padding: 0 4px;
    background: #2a2b29;
    border: 1px solid #383936;
    border-top-color: #222;
}
.dots {
    display: block;
    width: 20px;
    height: 10px;
    background: radial-gradient(#303030 1px, transparent 1px) 0 0 / 4px 4px;
}

/* status line */
.status-line {
    display: flex;
    align-items: center;
    gap: 2px;
    height: 31px;
    flex: none;
    border-bottom: 1px solid #30312f;
}
.status-line .grip {
    margin-right: 0;
}
select {
    appearance: none;
    height: 20px;
    padding: 0 2px;
    border: 1px solid #2f302e;
    border-radius: 2px;
    background: url("data:image/svg+xml,%3Csvg xmlns='http://www.w3.org/2000/svg' width='16' height='18'%3E%3Cpath d='M.5 0v18' stroke='%23383936'/%3E%3Cpath d='M4 7h8l-4 4z' fill='%23ddd'/%3E%3C/svg%3E") right center no-repeat, linear-gradient(#666764, #565754);
}
.mode {
    width: 97px;
    margin-bottom: 5px;
}
.sep {
    width: 9px;
    height: 18px;
    flex: none;
    background: linear-gradient(#1f201e, #1f201e) center / 1px 18px no-repeat, linear-gradient(#777, #777) center / 3px 10px no-repeat;
}
.tool {
    width: 24px;
    height: 24px;
    flex: none;
    display: flex;
    align-items: center;
    justify-content: center;
    border-radius: 2px;
}
.tool svg {
    width: 20px;
    height: 20px;
}
.tool.on, .tool.framed {
    background: #555754;
    border: 1px solid #343533;
}
.tool.on {
    background: #666865;
}
.tool.narrow {
    width: 18px;
}
.tool.slim {
    width: 14px;
}
.tool.spaced {
    margin-left: 4px;
}
.tool.help {
    font-size: 20px;
    font-weight: bold;
    color: #9ccbe9;
}
.arrow {
    width: 8px;
    height: 20px;
}
.target {
    width: 15px;
    height: 15px;
    margin: 0 3px 3px 0;
}
.axis {
    display: flex;
    align-items: center;
    gap: 3px;
}
.axis input {
    width: 38px;
    height: 22px;
    background: #292a28;
}
.panel-toggles {
    display: flex;
    gap: 2px;
    margin: 0 4px 0 auto;
}
.panel-toggles svg {
    width: 22px;
    height: 22px;
}

/* shelf */
.shelf {
    display: flex;
    height: 70px;
    flex: none;
    padding: 4px 0 2px;
}
.shelf-switch {
    width: 20px;
    display: flex;
    flex-direction: column;
    justify-content: flex-end;
    align-items: center;
    gap: 4px;
    border-left: 1px solid #262725;
    border-right: 1px solid #777;
}
.shelf-switch .block {
    width: 14px;
    height: 9px;
    background: #777;
}
.shelf-switch svg {
    width: 18px;
    height: 12px;
    border-top: 1px solid #bbb;
    padding-top: 3px;
}
.shelf-body {
    flex: 1;
    min-width: 0;
    padding: 2px 6px 0 5px;
    display: flex;
    flex-direction: column;
}
.shelf-tabs {
    display: flex;
    align-items: flex-end;
    height: 21px;
}
.shelf-tabs button {
    height: 19px;
    padding: 0 11px 0 10px;
    background: #484a46;
    border: 1px solid #2f302e;
    border-width: 1px 1px 0 1px;
    margin-right: -1px;
    border-radius: 2px 2px 0 0;
}
.shelf-tabs .active {
    height: 21px;
    background: #676966;
}
.trash {
    width: 14px;
    height: 16px;
    margin-left: auto;
}
.shelf-items {
    flex: 1;
    display: flex;
    align-items: center;
    overflow: hidden;
    padding-left: 2px;
    border: 1px solid #2c2d2b;
    box-shadow: inset 0 0 0 1px #575855;
}
.shelf-items button {
    width: 35px;
    flex: none;
    display: flex;
    justify-content: center;
}
.shelf-items svg {
    width: 28px;
    height: 28px;
}

/* middle area */
.workspace {
    flex: 1;
    min-height: 0;
    display: flex;
    border-top: 1px solid #353634;
    padding: 4px 0 2px;
}
.toolbox {
    width: 46px;
    flex: none;
    padding: 13px 7px 0 5px;
    display: flex;
    flex-direction: column;
    gap: 3px;
}
.toolbox button {
    height: 34px;
    flex: none;
    border: 1px solid #292a28;
}
.toolbox button svg {
    width: 100%;
    height: 100%;
}
.toolbox .active {
    background: #92938f;
}
.toolbox .last-tool {
    margin: 35px 0 11px;
}
.toolbox .layout {
    margin-bottom: 1px;
}
.toolbox .cut {
    height: 22px;
    margin-bottom: -3px;
}
.logo {
    width: 33px;
    height: 33px;
}
.outliner {
    width: 208px;
    flex: none;
    display: flex;
    flex-direction: column;
    border: 1px solid #858683;
    padding: 0 1px;
}
.outliner .menubar {
    padding-left: 6px;
}
.filter {
    display: flex;
    align-items: center;
    gap: 7px;
    padding: 2px 0 6px 2px;
}
.filter svg {
    width: 15px;
    height: 15px;
}
.filter input {
    flex: 1;
    height: 18px;
    background: #292a28;
}
.tree-area {
    flex: 1;
    min-height: 0;
    display: flex;
    gap: 2px;
}
.tree {
    flex: 1;
    margin: 0;
    padding: 0;
    list-style: none;
    background: #2a2b29;
}
.tree li {
    display: flex;
    align-items: center;
    gap: 1px;
    height: 20px;
    padding-left: 43px;
}
.tree svg {
    width: 18px;
    height: 16px;
}
.tree .dim {
    color: #6d6e6b;
}
.tree .selected {
    background: #668fb5;
    color: #fff;
}
.vscroll {
    width: 14px;
    display: flex;
    flex-direction: column;
    gap: 2px;
}
.hscroll {
    height: 14px;
    display: flex;
    gap: 2px;
}
.cap {
    width: 14px;
    height: 14px;
    background: #575955;
}
.thumb {
    flex: 1;
    display: flex;
    align-items: center;
    justify-content: center;
    background: #5c5e5a;
}
.outliner .hscroll {
    padding-right: 17px;
}
.track {
    background: #3a3b39;
}
.resize {
    height: 6px;
    margin: 0 65px;
    background: radial-gradient(#2c2d2b 1px, transparent 1px) 0 0 / 4px 4px;
}
.viewport {
    flex: 1;
    min-width: 0;
    display: flex;
    flex-direction: column;
    margin: 0 11px 0 5px;
}
.view-tools {
    display: flex;
    align-items: center;
    height: 20px;
    flex: none;
    overflow: hidden;
    padding-bottom: 2px;
}
.view-tools button {
    width: 20px;
    height: 18px;
    flex: none;
    padding: 1px;
}
.view-tools svg {
    width: 100%;
    height: 100%;
}
.view-tools .on {
    background: #5d5f5c;
    border: 1px solid #282927;
    padding: 0;
}
.view-tools .sep {
    height: 14px;
    background-size: 1px 14px, 3px 8px;
}
.scene {
    flex: 1;
    min-height: 0;
    width: 100%;
    background: linear-gradient(#7b8fa6, #4a5a69 50%, #17191b);
}
.scene text {
    font-size: 11px;
    font-weight: bold;
}
.axis-y {
    fill: #35ff3b;
}
.axis-z {
    fill: #1111dd;
}
.axis-x {
    fill: #ee1111;
}
.scene .camera-name {
    fill: #0b4f36;
    font-size: 10px;
}

/* channel box and layers */
.right-panel {
    width: 244px;
    flex: none;
    display: flex;
    flex-direction: column;
}
.channel-title {
    display: flex;
    align-items: center;
    justify-content: flex-end;
    gap: 3px;
    height: 17px;
    padding-right: 1px;
}
.channel-title .dots {
    width: 32px;
    margin: 0 5px 0 12px;
}
.channel-title svg {
    width: 12px;
    height: 12px;
    border: 1px solid #222;
}
.channel-icons {
    display: flex;
    justify-content: flex-end;
    gap: 3px;
    height: 24px;
    align-items: center;
}
.channel-icons svg {
    width: 18px;
    height: 18px;
}
.channel-menu {
    justify-content: flex-end;
    padding-right: 72px;
}
.channel-box {
    display: flex;
    gap: 2px;
    padding: 3px;
    border: 1px solid #292a28;
    box-shadow: inset 0 0 0 1px #5b5c59;
}
.channel-box table {
    flex: 1;
    border-collapse: collapse;
}
.channel-box tr {
    height: 16px;
}
.channel-box th {
    width: 156px;
    padding: 0 3px 0 0;
    font-weight: normal;
    text-align: right;
}
.channel-box td {
    padding: 0 1px;
    background: #2a2b29;
    border-bottom: 1px solid #50514e;
}
.channel-box .gap {
    height: 48px;
}
.channel-box .short {
    flex: 0 0 40px;
    margin: 34px 0 auto;
}
.channel-box .short .dots {
    width: 10px;
    height: 20px;
}
.layer-tabs {
    display: flex;
    justify-content: flex-end;
    padding: 11px 82px 0 0;
}
.layer-tabs button {
    height: 18px;
    padding: 0 11px;
    border: 1px solid #30312f;
    border-bottom: none;
    color: #888;
}
.layer-panel {
    flex: 1;
    min-height: 0;
    display: flex;
    flex-direction: column;
    padding: 0 5px 4px 3px;
    margin-bottom: 3px;
    border: 1px solid #5b5c59;
    outline: 1px solid #333;
}
.layer-panel .menubar {
    padding-left: 5px;
}
.layer-icons {
    display: flex;
    justify-content: flex-end;
    gap: 6px;
    padding: 2px 0 4px;
}
.layer-icons svg {
    width: 20px;
    height: 20px;
}
.layer-list {
    flex: 1;
    background: #2a2b29;
}
.layer-panel .hscroll {
    border: 0 solid #2a2b29;
    border-width: 1px 2px 0;
    height: 15px;
}
.thumb.half {
    flex: 0 0 120px;
    margin-right: auto;
}
.side-tabs {
    width: 22px;
    margin-left: 2px;
    flex: none;
    display: flex;
    flex-direction: column;
}
.side-tabs button {
    writing-mode: vertical-rl;
    width: 18px;
    border: 1px solid #2f302e;
    text-align: center;
}
.side-tabs .attr {
    height: 98px;
}
.side-tabs .chan {
    height: 150px;
}
.side-tabs .sett {
    height: 84px;
}
.side-tabs .active {
    width: 20px;
    background: #666865;
}

/* time slider */
.time-row, .range-row, .command-row, .help-row {
    display: flex;
    align-items: center;
    flex: none;
    border-bottom: 1px solid #30312f;
    box-shadow: 0 1px 0 #525350;
}
.time-row .grip, .range-row .grip, .command-row .grip, .help-row .grip {
    margin-right: 1px;
}
.time-row {
    height: 36px;
}
.timeline {
    flex: 1;
    display: grid;
    grid-template-columns: repeat(30, 1fr) 8px;
    height: 31px;
    padding-left: 9px;
    overflow: hidden;
    background: #2a2b29;
    border-bottom: 1px solid #666;
    color: #686966;
}
.timeline span {
    min-width: 0;
    background: linear-gradient(#757673, #757673) left bottom / 2px 15px no-repeat;
}
.timeline .current b {
    display: block;
    font-weight: normal;
    color: #fff;
}
.time-row .field {
    margin-left: 4px;
}
.playback {
    display: flex;
    gap: 8px;
    margin: 0 6px 0 8px;
}
.playback button, .playback svg {
    width: 20px;
    height: 16px;
}
.playback svg {
    fill: #d4d4d4;
}
.playback .key {
    fill: #e2334b;
}
.range-row {
    height: 30px;
    gap: 4px;
}
.range-row .grip {
    margin-right: -3px;
}
.range {
    flex: 1;
    height: 21px;
    padding: 2px;
    background: #272825;
    border: 1px solid #50514e;
}
.range-bar {
    width: 32.5%;
    height: 17px;
    display: flex;
    align-items: center;
    gap: 5px;
    padding: 0 4px;
    background: #656764;
}
.range-bar .end {
    margin-left: auto;
}
.nub {
    width: 10px;
    height: 12px;
    border-right: 1px solid #222;
    border-bottom: 1px solid #222;
}
.drop {
    display: flex;
    align-items: center;
    gap: 7px;
    margin-left: 4px;
    width: 115px;
}
.drop.anim {
    width: 114px;
}
.drop svg {
    width: 12px;
    height: 10px;
}
.auto-key {
    width: 22px;
    height: 18px;
    background: #b6202c;
    border: 1px solid #222;
}
.mini {
    width: 14px;
    height: 14px;
    margin-right: 5px;
    flex: none;
}
.command-row {
    height: 31px;
}
.command-row label {
    width: 46px;
    padding-left: 11px;
}
.command-row input {
    flex: 626;
    height: 23px;
    background: #2a2b29;
    border: 1px solid #393a37;
}
.command-row output {
    flex: 653;
    height: 24px;
    line-height: 24px;
    margin: 0 3px 0 6px;
    padding-left: 4px;
    background: #000;
    color: #ddd;
}
.help-row {
    height: 26px;
}
.help-line {
    flex: 1;
    height: 21px;
    margin-right: 4px;
    border: 1px solid #2e2f2d;
    border-right-color: #666;
    border-bottom-color: #666;
}
.edge {
    height: 2px;
    flex: none;
}

/* option window */
.dialog {
    position: absolute;
    left: 682px;
    top: 43px;
    width: 560px;
    height: 388px;
    display: flex;
    flex-direction: column;
    padding: 0 5px 6px;
    border: 1px solid #1f2c38;
    border-radius: 7px;
    background: linear-gradient(100deg, #dce9f6, #b5cfe9 30%, #a3bcda 45%, #bdd6f0 55%, #c4daf0);
    box-shadow: inset 0 0 0 1px #eef6ff, 0 2px 10px 3px rgba(0, 0, 0, .65);
}
.titlebar {
    display: flex;
    align-items: center;
    gap: 5px;
    height: 28px;
    flex: none;
}
.titlebar > svg {
    width: 16px;
    height: 16px;
}
.titlebar h1 {
    margin: 0;
    font-size: 12px;
    font-weight: normal;
    color: #111;
}
.win-buttons {
    display: flex;
    margin-left: auto;
    align-self: flex-start;
    border: 1px solid #566878;
    border-top: none;
    border-radius: 0 0 5px 5px;
    overflow: hidden;
}
.win-buttons button {
    width: 28px;
    height: 18px;
    display: flex;
    align-items: center;
    justify-content: center;
    border-right: 1px solid #566878;
    background: linear-gradient(#dbe7f2, #a3b7cb 50%, #b4cade);
}
.win-buttons svg {
    width: 14px;
    height: 12px;
}
.win-buttons .close {
    width: 46px;
    border: none;
    background: linear-gradient(#e09b8c, #c2412b 50%, #d3664c);
}
.dialog-body {
    flex: 1;
    min-height: 0;
    display: flex;
    flex-direction: column;
    padding: 0 5px 5px 4px;
    background: #444542;
    border: 1px solid #32404d;
}
.dialog .menubar {
    height: 22px;
    padding-left: 4px;
}
.options {
    flex: 1;
    padding: 9px 13px;
    border: 1px solid #292a28;
    outline: 1px solid #5b5c59;
    outline-offset: -4px;
    box-shadow: inset 0 0 0 2px #4b4c49, inset 0 0 0 3px #292a28;
}
.option-form {
    display: grid;
    grid-template-columns: 163px 1fr;
    column-gap: 9px;
    grid-template-rows: 20px 15px 15px 15px 22px;
    align-items: center;
}
.option-form label {
    text-align: right;
}
.option-form select {
    width: 163px;
}
.option-form input[type="checkbox"] {
    appearance: none;
    width: 12px;
    height: 12px;
    background: #292a28;
}
.option-form input[type="checkbox"]:checked {
    background: #292a28 url("data:image/svg+xml,%3Csvg xmlns='http://www.w3.org/2000/svg' viewBox='0 0 12 12'%3E%3Cpath d='M2 6l3 3 5-7' fill='none' stroke='%23eee' stroke-width='2'/%3E%3C/svg%3E");
}
.weight {
    display: flex;
    gap: 3px;
    align-items: center;
}
.weight .field {
    width: 78px;
    height: 18px;
    padding: 0 2px;
}
.weight input[type="range"] {
    appearance: none;
    flex: 1;
    height: 16px;
    background: linear-gradient(#292a28, #292a28) center / 100% 1px no-repeat;
}
.weight input[type="range"]::-webkit-slider-thumb {
    appearance: none;
    width: 9px;
    height: 14px;
    border: 1px solid #222;
    border-radius: 1px 1px 5px 5px;
    background: #8b8c89;
}
.actions {
    display: grid;
    grid-template-columns: repeat(3, 1fr);
    gap: 4px;
    margin: 8px 2px 0;
}
.actions button {
    height: 27px;
    border: 1px solid #2b2c2a;
    background: linear-gradient(#656764, #555754);
}
.cursor {
    position: absolute;
    left: 861px;
    top: 88px;
    width: 14px;
    height: 22px;
}
```
